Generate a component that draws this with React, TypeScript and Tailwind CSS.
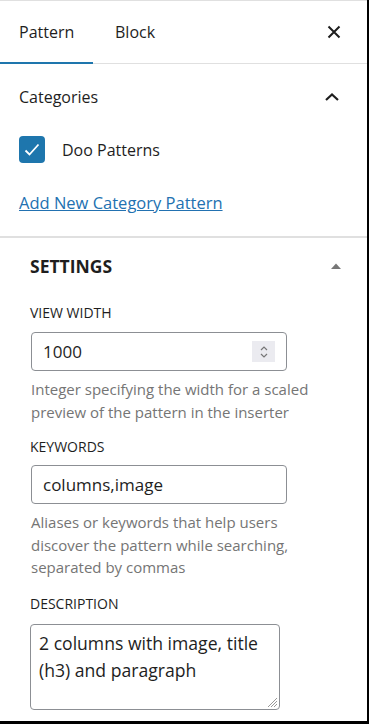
import React from "react";

function Field({ label, className, children }: { label: string; className?: string; children: React.ReactNode }) {
  return (
    <div className={"flex flex-col " + (className ?? "")}>
      <label className="text-[14px] uppercase leading-[20px] text-[#1e1e1e]">{label}</label>
      {children}
    </div>
  );
}

export default function App() {
  return (
    <div className="relative h-[724px] w-[369px] overflow-hidden bg-white font-['Open_Sans',sans-serif] text-[#1e1e1e]">
      <div className="h-[721px] w-[367px] border-t border-[#e0e0e0] bg-white">
        {/* tabs */}
        <div className="flex h-[63px] items-stretch border-b border-[#e0e0e0]">
          <button className="relative w-[93px] pl-[19px] text-left text-[16px]">
            Pattern
            <span className="absolute bottom-[-1px] left-0 h-[2px] w-full bg-[#1e76ad]" />
          </button>
          <button className="pl-[22px] text-left text-[16px]">Block</button>
          <div className="ml-auto flex w-[62px] items-center justify-center pr-[4px]">
            <svg width="14" height="14" viewBox="0 0 14 14">
              <path d="M1.5 1.5l11 11M12.5 1.5l-11 11" stroke="#1e1e1e" strokeWidth="2" />
            </svg>
          </div>
        </div>

        {/* categories */}
        <div className="border-b-2 border-[#e0e0e0] px-[19px] pb-[21px]">
          <div className="flex h-[66px] items-center justify-between">
            <span className="text-[16px]">Categories</span>
            <svg width="16" height="10" viewBox="0 0 16 10" className="mr-[8px]">
              <path d="M2 8l6-5.5 6 5.5" stroke="#1e1e1e" strokeWidth="2.2" fill="none" />
            </svg>
          </div>
          <div className="mt-[6px] flex items-center gap-[17px]">
            <span className="flex h-[27px] w-[26px] items-center justify-center rounded-[4px] bg-[#1e76ad]">
              <svg width="20" height="20" viewBox="0 0 20 20">
                <path d="M3.5 10.5l4 4L16.5 4.5" stroke="white" strokeWidth="1.8" fill="none" />
              </svg>
            </span>
            <span className="text-[16px]">Doo Patterns</span>
          </div>
          <a href="#" className="mt-[28px] block text-[16.5px] leading-[24px] text-[#2271b1] underline">
            Add New Category Pattern
          </a>
        </div>

        {/* settings */}
        <div className="px-[30px] pt-[14px]">
          <div className="flex items-center justify-between">
            <span className="text-[17.5px] font-bold uppercase leading-[28px]">Settings</span>
            <svg width="12" height="10" viewBox="0 0 12 10" className="mr-[-5px]">
              <path d="M1 8L6 2.5 11 8z" fill="#777" />
            </svg>
          </div>

          <Field label="View width" className="mt-[23px]">
            <div className="ml-[1px] mt-[9px] flex h-[39px] w-[256px] items-center rounded-[4px] border border-[#8c8f94] pl-[11px] pr-[11px]">
              <span className="flex-1 text-[17px]">1000</span>
              <span className="flex h-[21px] w-[23px] items-center justify-center bg-[#ebebf0]">
                <svg width="10" height="16" viewBox="0 0 10 16">
                  <path d="M2 6l3-3 3 3M2 10l3 3 3-3" stroke="#777" strokeWidth="1.2" fill="none" />
                </svg>
              </span>
            </div>
            <p className="ml-[1px] mt-[7px] w-[282px] text-[15px] leading-[22.5px] text-[#757575]">
              Integer specifying the width for a scaled preview of the pattern in the inserter
            </p>
          </Field>

          <Field label="Keywords" className="mt-[14px]">
            <div className="ml-[1px] mt-[8px] flex h-[39px] w-[256px] items-center rounded-[4px] border border-[#8c8f94] pl-[11px]">
              <span className="text-[17px]">columns,image</span>
            </div>
            <p className="ml-[1px] mt-[7px] w-[282px] text-[15px] leading-[22.5px] text-[#757575]">
              Aliases or keywords that help users discover the pattern while searching, separated by commas
            </p>
          </Field>

          <Field label="Description" className="mt-[15px]">
            <div className="relative mt-[10px] h-[86px] w-[250px] rounded-[4px] border border-[#8c8f94] px-[8px] pt-[5px]">
              <p className="text-[17.6px] leading-[27px]">2 columns with image, title (h3) and paragraph</p>
              <svg width="12" height="12" viewBox="0 0 12 12" className="absolute bottom-[1px] right-[1px]">
                <path d="M11 2L2 11M11 5L5 11M11 8L8 11" stroke="#999" strokeWidth="1" />
              </svg>
            </div>
          </Field>
        </div>
      </div>
      <div className="absolute left-[367px] top-0 h-[724px] w-[2px] bg-black" />
      <div className="absolute left-0 top-[721px] h-[3px] w-[369px] bg-black" />
    </div>
  );
}
